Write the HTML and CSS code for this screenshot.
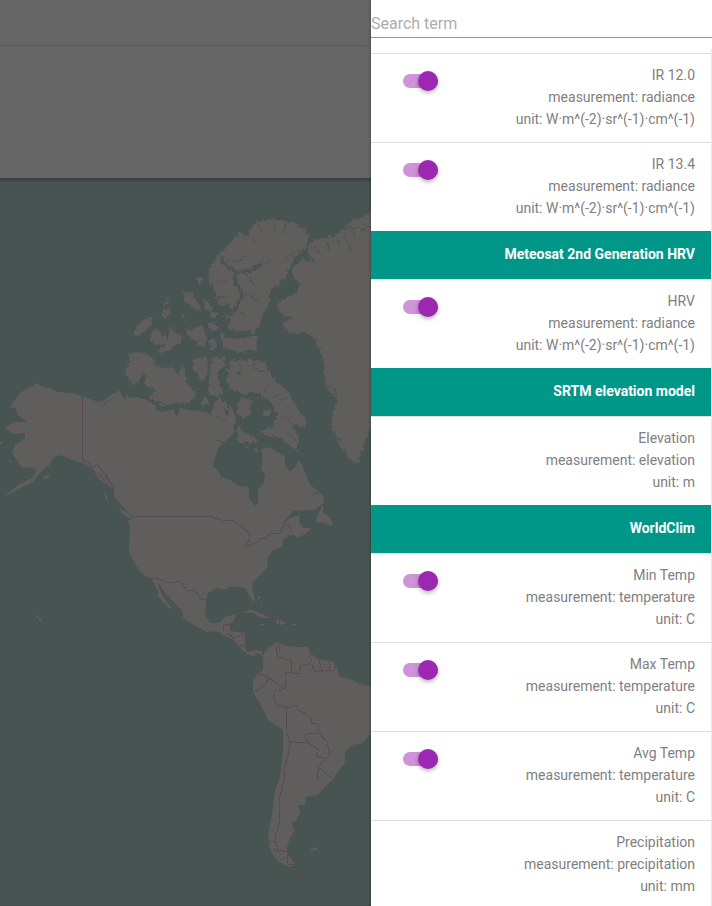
FILE: index.html
```html
<!DOCTYPE html>
<html lang="en">
<head>
<meta charset="utf-8">
<meta name="viewport" content="width=device-width, initial-scale=1">
<title>Data sources</title>
<link rel="stylesheet" href="styles.css">
</head>
<body>
<div class="app">
  <main class="workspace">
    <div class="tabs"></div>
    <div class="ribbon"></div>
    <div class="map">
      <svg class="map-svg" viewBox="0 178 371 728" preserveAspectRatio="xMinYMin slice" role="img" aria-label="World map">
        <defs>
          <filter id="coast" filterUnits="userSpaceOnUse" x="0" y="178" width="400" height="728" color-interpolation-filters="sRGB">
            <feTurbulence type="fractalNoise" baseFrequency="0.25" numOctaves="2" seed="4" result="n"/>
            <feDisplacementMap in="SourceGraphic" in2="n" scale="7" xChannelSelector="R" yChannelSelector="G"/>
          </filter>
        </defs>
        <g class="land">
          <path d="M10 407L20 393 28 388 32 387 37 383 42 387 50 388 58 392 70 393 77 394 82 397 88 398 97 402 103 401 108 397 113 393 116 394 118 390 121 393 125 400 127 393 129 398 137 397 147 400 157 407 155 410 163 412 173 409 177 417 180 408 190 410 207 412 210 415 215 402 220 397 223 403 225 413 228 417 230 405 234 412 236 422 233 427 235 431 230 437 225 441 220 445 215 457 213 467 218 470 221 477 230 480 240 486 249 487 249 499 255 506 258 503 258 490 264 483 265 475 261 469 263 460 261 449 270 447 277 452 285 457 285 465 290 472 295 468 298 460 302 465 307 477 310 485 317 490 323 495 324 502 315 510 293 511 285 520 282 525 290 518 300 515 299 522 303 528 312 528 305 534 297 538 294 535 290 535 283 540 282 547 273 550 268 557 267 568 260 575 253 582 252 587 255 600 253 602 247 592 245 588 237 587 228 587 227 590 217 588 208 593 206 600 205 615 210 623 220 623 225 617 236 614 234 620 231 624 230 631 245 633 245 645 248 652 257 650 262 652 263 657 258 653 253 656 247 654 240 648 233 639 222 635 217 631 207 632 190 623 183 618 183 612 170 598 163 590 160 585 157 583 163 597 172 608 170 609 163 602 157 595 159 592 152 580 140 572 133 560 129 552 130 527 128 520 134 519 120 503 115 498 113 488 108 486 97 477 92 468 83 463 72 460 67 457 60 455 54 457 50 464 47 467 40 473 33 482 22 487 3 498 18 485 32 478 37 470 31 467 23 468 20 465 12 453 15 445 25 438 25 433 12 434 5 427 17 422 27 422 18 415 15 408Z"/>
          <path d="M263 655L268 648 278 642 285 646 297 647 308 647 310 653 318 659 333 661 337 668 340 677 350 679 360 684 380 688 380 730 371 733 363 743 353 745 345 752 345 762 338 772 332 780 325 787 318 795 306 797 305 805 298 805 300 812 297 820 291 823 295 830 290 838 287 847 287 853 295 864 290 867 278 862 270 850 268 835 273 807 275 790 280 777 283 750 283 730 268 720 262 707 253 692 253 682 258 673 263 670Z"/>
          <path d="M243 613L250 609 260 613 271 618 262 618 253 613ZM275 622L278 619 287 623 280 625ZM260 624h5v1h-5ZM292 624h4v1h-4ZM315 522L319 512 323 505 323 513 330 517 333 526 325 523ZM118 508L127 512 134 520 125 516ZM104 492L106 494 109 502 105 498ZM43 477L50 473 48 478 44 479ZM7 461L13 461 10 463ZM0 442h2v2h-2ZM310 850L314 847 319 849 312 851ZM38 617L42 620 40 622ZM29 612h1v1h-1ZM33 614h2v1h-2ZM36 616h2v1h-2ZM223 678h2v1h-2ZM258 596h2v3h-2ZM261 602h1v3h-1Z"/>
        </g>
        <g filter="url(#coast)">
          <g class="land">
            <path d="M223 250L240 233 248 235 253 225 263 219 280 220 293 222 305 230 309 238 305 248 295 258 288 270 282 282 270 290 270 303 262 317 261 327 255 332 230 330 228 325 233 313 227 303 220 307 215 292 208 280 210 267 217 257Z"/>
            <path d="M220 332L226 337 240 338 257 336 257 350 240 352 223 348Z"/>
            <path d="M390 205L371 213 360 217 348 223 343 230 337 235 325 237 313 240 308 247 310 262 303 258 292 270 293 278 300 282 298 292 278 302 277 308 282 315 295 317 282 323 290 333 305 332 315 338 323 357 325 377 328 390 337 400 332 413 332 425 338 442 347 457 358 463 365 442 371 428 390 400Z"/>
            <path d="M228 367L233 360 250 360 265 362 268 372 278 383 290 393 292 402 300 412 307 420 305 428 297 425 292 424 299 438 298 452 287 443 277 437 263 435 262 430 272 428 277 417 273 405 265 398 258 393 243 393 230 390 227 380Z"/>
            <path d="M240 398L252 400 250 413 243 420 237 410ZM238 425L245 432 253 437 260 442 253 442 240 443 237 440ZM264 408l5 2 0 6-6-1ZM245 447l5-2 0 3-4 1ZM255 448h3v4h-3Z"/>
            <path d="M145 370L153 363 163 368 173 367 177 374 183 365 187 383 195 392 195 398 188 403 173 403 163 406 148 397 157 390 145 385Z"/>
            <path d="M128 353L138 352 148 355 155 362 145 372 140 380 133 385 126 377 128 363Z"/>
            <path d="M133 333L143 320 152 316 153 322 148 328 140 335 135 336ZM150 340L152 332 157 328 163 335 168 340 170 325 173 327 175 335 183 335 182 343 173 347 163 353 158 351 165 346 155 345ZM162 303L168 299 172 305ZM161 312L170 308 170 316 163 318ZM183 291L190 293 198 302 201 310 197 312 190 305 185 302ZM203 298L213 307 210 312 204 307ZM186 328L192 332 195 327 203 327 206 337 205 346 198 347 195 340 188 338ZM208 340L215 338 217 349 211 350ZM208 323L215 323 218 328 213 332ZM198 278h4v6h-4ZM210 313h7v4h-7ZM224 315h4v5h-4ZM181 313l3 1 3 8-3-2Z"/>
            <path d="M195 358L207 357 208 372 203 382 198 375 192 368ZM212 357L226 357 223 367 217 373 222 393 215 398 208 392 209 378ZM203 395L210 403 202 407ZM190 392l5 0 1 5-5 0ZM222 400l5 2 0 9-5-3Z"/>
          </g>
          <g class="inlets">
            <path class="wide" d="M221 257L226 266 236 272 248 271 262 265M234 274L236 285 241 291 242 298 237 303M239 302L234 313M256 332L262 322 268 308"/>
            <path d="M226 262L240 260 246 256M246 273L254 285M257 267L263 256M262 265L270 262M241 295L250 295 257 301M250 298L256 293M240 309L246 318M258 223L261 230M272 221L276 230M285 223L284 232M248 235L256 242M285 259L303 249M243 233L247 240M217 283L226 281M215 298L228 296M232 328L238 322M345 228L360 227 368 234M343 232L352 252M337 236L340 248M326 238L329 250M313 245L321 254M358 221L370 227M351 229L356 240M309 257L316 262"/>
            <path d="M241 362L239 376M253 362L255 370 265 372M264 392L270 386M272 397L282 393M280 400L289 397M292 424L282 416M296 440L286 432M328 386L336 390 336 398M342 441L336 438M346 450L342 452"/>
          </g>
        </g>
        <g class="inlets">
          <path d="M240 424L236 414M215 440L224 442M216 416L226 421M312 495L320 492M258 486L252 490M103 405L113 397M279 646L280 652M172 409L158 401M93 470L108 484M99 471L110 489M105 473L113 487"/>
          <path d="M269 817L274 821M268 828L275 833M269 840L276 843M273 850L280 852M279 860L286 858"/>
        </g>
        <g class="borders">
          <path d="M82 397V460L88 462 92 468 97 464 104 473 108 480 113 486 113 490M132 516H213L214 518 222 520 232 520 242 527 249 533 249 540 246 546 258 542 260 538 266 538 270 533 280 533 285 524 289 524 291 531 293 533"/>
          <path d="M150 578L157 578 166 582 175 582 180 581 187 590 192 590 196 592 201 599 206 600M220 634L224 630 223 626 230 624 230 635 234 638 240 635 245 634M230 635L225 634M239 645L244 646 248 652M263 655L262 650M279 620V624"/>
          <path d="M280 642L276 650 278 656 285 659 291 660 291 672 295 674 301 673 299 667 308 664 312 660 309 657 313 653M311 663L315 672 322 671 319 660M322 671L330 670 329 661M330 670L334 670 336 665M291 672L285 673 285 688 278 685 268 677 258 673M268 677L266 684 258 690 254 690M285 688L281 690 275 691 273 698 277 705 283 705 287 708 297 705 298 710 311 717 312 723 318 724 319 733 327 742 330 755 326 759 316 756 319 750 307 742 305 735 308 733 318 733M307 742L299 743 293 741 290 743 286 730 287 708M290 743L288 755 284 768 284 780 279 800 280 820 275 838 278 850 287 852 288 864 294 864M330 755L318 767 332 778M319 767L317 780"/>
        </g>
      </svg>
    </div>
  </main>

  <aside class="drawer">
    <form class="search" role="search">
      <input class="search-input" type="search" aria-label="Search term" placeholder="Search term">
    </form>
    <div class="list">
      <section>
        <label class="row">
          <input class="toggle" type="checkbox" role="switch" checked>
          <span class="info"><span>IR 12.0</span><span>measurement: radiance</span><span>unit: W·m^(-2)·sr^(-1)·cm^(-1)</span></span>
        </label>
        <label class="row">
          <input class="toggle" type="checkbox" role="switch" checked>
          <span class="info"><span>IR 13.4</span><span>measurement: radiance</span><span>unit: W·m^(-2)·sr^(-1)·cm^(-1)</span></span>
        </label>
      </section>
      <section>
        <h2 class="group">Meteosat 2nd Generation HRV</h2>
        <label class="row">
          <input class="toggle" type="checkbox" role="switch" checked>
          <span class="info"><span>HRV</span><span>measurement: radiance</span><span>unit: W·m^(-2)·sr^(-1)·cm^(-1)</span></span>
        </label>
      </section>
      <section>
        <h2 class="group">SRTM elevation model</h2>
        <div class="row">
          <span class="info"><span>Elevation</span><span>measurement: elevation</span><span>unit: m</span></span>
        </div>
      </section>
      <section>
        <h2 class="group">WorldClim</h2>
        <label class="row">
          <input class="toggle" type="checkbox" role="switch" checked>
          <span class="info"><span>Min Temp</span><span>measurement: temperature</span><span>unit: C</span></span>
        </label>
        <label class="row">
          <input class="toggle" type="checkbox" role="switch" checked>
          <span class="info"><span>Max Temp</span><span>measurement: temperature</span><span>unit: C</span></span>
        </label>
        <label class="row">
          <input class="toggle" type="checkbox" role="switch" checked>
          <span class="info"><span>Avg Temp</span><span>measurement: temperature</span><span>unit: C</span></span>
        </label>
        <div class="row">
          <span class="info"><span>Precipitation</span><span>measurement: precipitation</span><span>unit: mm</span></span>
        </div>
      </section>
    </div>
  </aside>
</div>
</body>
</html>
```
FILE: styles.css
```css
* {
  box-sizing: border-box;
}

body {
  margin: 0;
  font-family: Roboto, "Liberation Sans", sans-serif;
  font-size: 14px;
  color: #808080;
}

.app {
  display: grid;
  grid-template-columns: 371fr 341fr;
  height: 100vh;
  overflow: hidden;
}

.workspace {
  display: flex;
  flex-direction: column;
  min-width: 0;
  min-height: 0;
  background: #666;
}

.tabs {
  height: 46px;
  border-bottom: 1px solid #5b5b5b;
}

.ribbon {
  height: 132px;
}

.map {
  flex: 1;
  min-height: 0;
  background: linear-gradient(#363f3d, #485452 5px);
  border-bottom: 1px solid #404a48;
}

.map-svg {
  display: block;
  width: 100%;
  height: 100%;
}

.land {
  fill: #605e5c;
}

.inlets {
  fill: none;
  stroke: #485452;
  stroke-width: 1;
}

.inlets .wide {
  stroke-width: 3;
}

.borders {
  fill: none;
  stroke: #5a4a59;
  stroke-width: 1;
  shape-rendering: crispEdges;
}

.drawer {
  position: relative;
  display: flex;
  flex-direction: column;
  min-width: 0;
  min-height: 0;
  background: #fff;
  box-shadow: 0 0 3px rgba(0, 0, 0, 0.4);
}

.search {
  padding: 8px 0 11px;
}

.search-input {
  display: block;
  width: 100%;
  height: 30px;
  padding: 2px 0 0;
  border: 0;
  border-bottom: 1px solid #949494;
  border-radius: 0;
  outline: 0;
  appearance: none;
  background: none;
  font: 16px Roboto, "Liberation Sans", sans-serif;
}

.search-input::placeholder {
  color: #adadad;
}

.list {
  flex: 1;
  min-height: 0;
  padding-top: 4px;
  overflow: hidden;
  border-right: 1px solid #ececec;
}

.group {
  display: flex;
  align-items: center;
  justify-content: flex-end;
  height: 48px;
  margin: 0;
  padding: 0 16px 2px;
  background: #009688;
  color: #fff;
  font-size: 14px;
  font-weight: 700;
}

.row {
  display: flex;
  align-items: flex-start;
  justify-content: space-between;
  padding: 10px 16px 12px 32px;
  border-top: 1px solid #e0e0e0;
}

.info {
  display: flex;
  flex-direction: column;
  margin-left: auto;
  text-align: right;
  line-height: 22px;
}

.toggle {
  position: relative;
  flex: none;
  width: 35px;
  height: 14px;
  margin: 10px 0 0;
  appearance: none;
  border-radius: 7px;
  background: #ddd;
}

.toggle::after {
  content: "";
  position: absolute;
  top: -3px;
  left: 0;
  width: 20px;
  height: 20px;
  border-radius: 50%;
  background: #fafafa;
  box-shadow: 0 2px 4px rgba(0, 0, 0, 0.3);
}

.toggle:checked {
  background: #ce93d8;
}

.toggle:checked::after {
  left: 15px;
  background: #9c27b0;
}
```
